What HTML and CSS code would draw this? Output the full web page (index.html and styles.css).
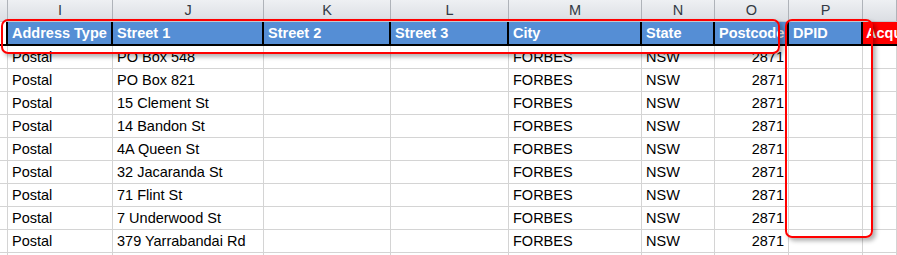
FILE: index.html
```html
<!DOCTYPE html>
<html>
<head>
<meta charset="utf-8">
<link rel="stylesheet" href="styles.css">
</head>
<body>
<div class="sheet">
  <div class="row colhead">
    <div class="c"></div><div class="c">I</div><div class="c">J</div><div class="c">K</div><div class="c">L</div><div class="c">M</div><div class="c">N</div><div class="c">O</div><div class="c">P</div><div class="c"></div>
  </div>
  <div class="row head">
    <div class="c blank"></div><div class="c">Address Type</div><div class="c">Street 1</div><div class="c">Street 2</div><div class="c">Street 3</div><div class="c">City</div><div class="c">State</div><div class="c">Postcode</div><div class="c">DPID</div><div class="c red">Acquired</div>
  </div>
  <div class="row data"><div class="c"></div><div class="c">Postal</div><div class="c">PO Box 548</div><div class="c"></div><div class="c"></div><div class="c">FORBES</div><div class="c">NSW</div><div class="c num">2871</div><div class="c"></div><div class="c"></div></div>
  <div class="row data"><div class="c"></div><div class="c">Postal</div><div class="c">PO Box 821</div><div class="c"></div><div class="c"></div><div class="c">FORBES</div><div class="c">NSW</div><div class="c num">2871</div><div class="c"></div><div class="c"></div></div>
  <div class="row data"><div class="c"></div><div class="c">Postal</div><div class="c">15 Clement St</div><div class="c"></div><div class="c"></div><div class="c">FORBES</div><div class="c">NSW</div><div class="c num">2871</div><div class="c"></div><div class="c"></div></div>
  <div class="row data"><div class="c"></div><div class="c">Postal</div><div class="c">14 Bandon St</div><div class="c"></div><div class="c"></div><div class="c">FORBES</div><div class="c">NSW</div><div class="c num">2871</div><div class="c"></div><div class="c"></div></div>
  <div class="row data"><div class="c"></div><div class="c">Postal</div><div class="c">4A Queen St</div><div class="c"></div><div class="c"></div><div class="c">FORBES</div><div class="c">NSW</div><div class="c num">2871</div><div class="c"></div><div class="c"></div></div>
  <div class="row data"><div class="c"></div><div class="c">Postal</div><div class="c">32 Jacaranda St</div><div class="c"></div><div class="c"></div><div class="c">FORBES</div><div class="c">NSW</div><div class="c num">2871</div><div class="c"></div><div class="c"></div></div>
  <div class="row data"><div class="c"></div><div class="c">Postal</div><div class="c">71 Flint St</div><div class="c"></div><div class="c"></div><div class="c">FORBES</div><div class="c">NSW</div><div class="c num">2871</div><div class="c"></div><div class="c"></div></div>
  <div class="row data"><div class="c"></div><div class="c">Postal</div><div class="c">7 Underwood St</div><div class="c"></div><div class="c"></div><div class="c">FORBES</div><div class="c">NSW</div><div class="c num">2871</div><div class="c"></div><div class="c"></div></div>
  <div class="row data"><div class="c"></div><div class="c">Postal</div><div class="c">379 Yarrabandai Rd</div><div class="c"></div><div class="c"></div><div class="c">FORBES</div><div class="c">NSW</div><div class="c num">2871</div><div class="c"></div><div class="c"></div></div>
  <div class="row data"><div class="c"></div><div class="c"></div><div class="c"></div><div class="c"></div><div class="c"></div><div class="c"></div><div class="c"></div><div class="c"></div><div class="c"></div><div class="c"></div></div>

  <div class="mark mark-head"></div>
  <div class="mark mark-dpid"></div>
</div>
</body>
</html>
```

FILE: styles.css
```css
html, body {
  margin: 0;
  padding: 0;
  background: #ffffff;
}
body {
  width: 897px;
  height: 255px;
  overflow: hidden;
  font-family: "Liberation Sans", Arial, sans-serif;
  font-size: 14.5px;
  color: #000;
}
.sheet {
  position: relative;
  width: 897px;
  height: 255px;
  overflow: hidden;
}
.row {
  display: grid;
  grid-template-columns: 8px 105px 151px 127px 118px 133px 73px 74px 74px 1fr;
}
.c {
  box-sizing: border-box;
  white-space: nowrap;
  overflow: hidden;
}
.colhead {
  height: 22px;
  background: linear-gradient(#eef0f3, #dbdee3);
  border-bottom: 1px solid #c4c8ce;
  box-sizing: border-box;
}
.colhead .c {
  border-right: 1px solid #afb3b9;
  text-align: center;
  line-height: 21px;
  color: #333a44;
}
.head {
  height: 24px;
}
.head .c {
  background: #558ed5;
  color: #fff;
  font-weight: bold;
  border-right: 2px solid #000;
  border-bottom: 2px solid #000;
  padding: 1px 0 0 4px;
  line-height: 21px;
}
.head .c.blank {
  background: #fff;
}
.head .c.red {
  background: #ff0000;
  border-right: none;
  padding-left: 3px;
}
.data {
  height: 23px;
}
.data .c {
  border-right: 1px solid #d4d4d4;
  border-bottom: 1px solid #d4d4d4;
  padding: 1px 0 0 4px;
  line-height: 21px;
}
.data .c.num {
  text-align: right;
  padding-right: 4px;
}
.mark {
  position: absolute;
  box-sizing: border-box;
  border: 2px solid #ff0000;
  border-radius: 7px;
  box-shadow: 3px 3px 4px rgba(0, 0, 0, 0.3);
}
.mark-head {
  left: 1px;
  top: 19px;
  width: 779px;
  height: 35px;
}
.mark-dpid {
  left: 785px;
  top: 19px;
  width: 88px;
  height: 219px;
}
```
